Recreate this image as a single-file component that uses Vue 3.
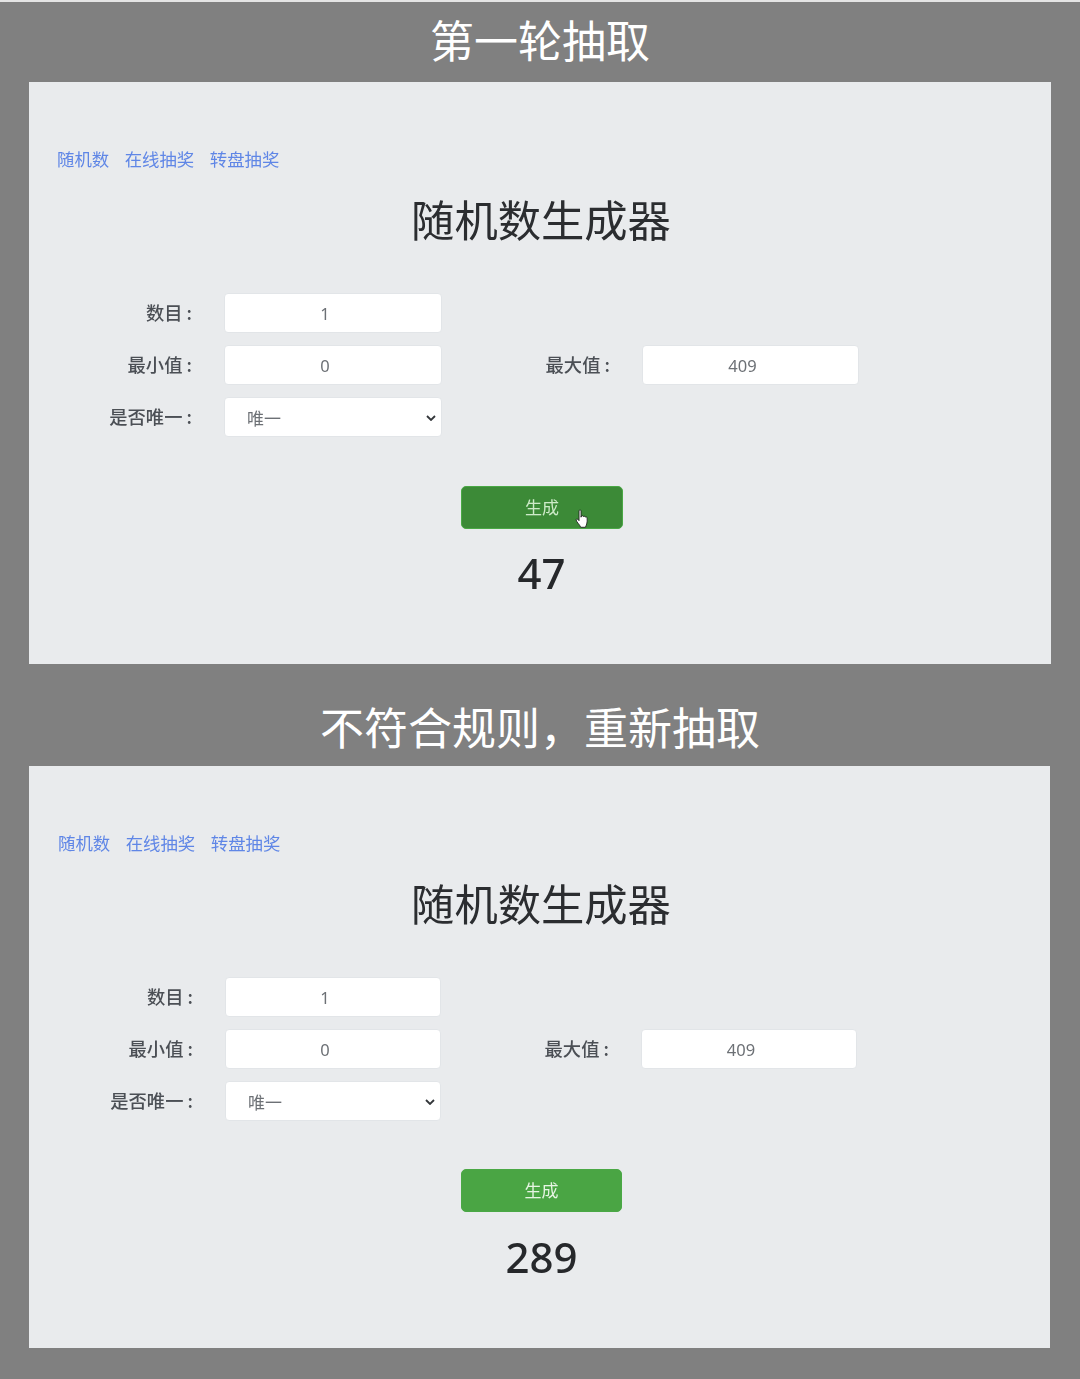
<script setup>
const rounds = [
  { title: '第一轮抽取', result: '47', variant: 'first', pressed: true },
  { title: '不符合规则，重新抽取', result: '289', variant: 'second', pressed: false }
]
const links = ['随机数', '在线抽奖', '转盘抽奖']
</script>

<template>
  <div class="page">
    <section v-for="r in rounds" :key="r.title" class="round" :class="r.variant">
      <h2 class="caption">{{ r.title }}</h2>
      <div class="panel">
        <nav class="nav">
          <a v-for="l in links" :key="l" href="#">{{ l }}</a>
        </nav>
        <h1 class="heading">随机数生成器</h1>
        <form class="form" @submit.prevent>
          <label class="label">数目 :</label>
          <input class="field" value="1" />
          <span></span><span></span>
          <label class="label">最小值 :</label>
          <input class="field" value="0" />
          <label class="label">最大值 :</label>
          <input class="field" value="409" />
          <label class="label">是否唯一 :</label>
          <div class="select-wrap">
            <select class="field pick"><option>唯一</option></select>
            <svg class="chevron" viewBox="0 0 10 6" width="10" height="6">
              <path d="M1 1l4 4 4-4" fill="none" stroke="#33363a" stroke-width="1.800"/>
            </svg>
          </div>
        </form>
        <div class="action">
          <button class="generate" :class="{ pressed: r.pressed }" type="button">
            生成
            <svg v-if="r.pressed" class="cursor" viewBox="1 0 13 20" width="15" height="21">
              <path d="M4.200 1.800c0-1.100 1.900-1.100 1.900 0v6l.4-1.200c.9-.5 1.600-.2 1.800.6.8-.6 1.600-.3 1.900.5.8-.4 1.600 0 1.700.9.2 1.900.1 4.100-.4 5.700-.4 1.300-.9 2.200-1.200 3.100H5.800c-.5-1.500-1.500-2.500-2.600-3.900-.7-.9-1.500-2.100-1.700-3-.2-.8.6-1.300 1.300-.8l1.400 1.400z" fill="#fff" stroke="#1c1c1c" stroke-width=".8" stroke-linejoin="round"/>
            </svg>
          </button>
        </div>
        <div class="result">{{ r.result }}</div>
      </div>
    </section>
  </div>
</template>

<style>
html, body { margin: 0; background: #808080; }
</style>

<style scoped>
.page {
  width: 1080px;
  height: 1379px;
  box-sizing: border-box;
  background: #808080;
  border-top: 2px solid #e4e4e4;
  overflow: hidden;
  font-family: "Noto Sans", "Noto Sans CJK SC", sans-serif;
}
.caption {
  margin: 0;
  color: #fff;
  font-family: "Noto Sans CJK SC", sans-serif;
  font-size: 44px;
  font-weight: 400;
  line-height: 76px;
  text-align: center;
}
.first .caption { height: 80px; line-height: 74px; }
.second .caption { height: 102px; padding-top: 24px; box-sizing: border-box; }
.panel {
  height: 582px;
  box-sizing: border-box;
  margin-left: 29px;
  width: 1022px;
  background: #e9ebed;
  padding: 65px 0 0 28px;
  filter: blur(.5px);
}
.second .panel { width: 1021px; padding-left: 29px; }
.nav { display: flex; gap: 15.500px; height: 24px; line-height: 24px; }
.nav a {
  color: #5f86e6;
  font-size: 17.400px;
  text-decoration: none;
  font-family: "Noto Sans CJK SC", sans-serif;
}
.heading {
  margin: 22px 0 0 -26px;
  height: 50px;
  line-height: 50px;
  font-family: "Noto Sans CJK SC", sans-serif;
  font-size: 43.300px;
  font-weight: 400;
  color: #2b2d30;
  text-align: center;
}
.form {
  display: grid;
  grid-template-columns: 137px 218px 140px 217px;
  grid-auto-rows: 40px;
  gap: 12px 30px;
  margin-top: 50px;
  align-items: center;
}
.second .form { grid-template-columns: 137px 216px 140px 216px; }
.label {
  text-align: right;
  font-size: 18.300px;
  font-weight: 500;
  color: #4b4f55;
  font-family: "Noto Sans CJK SC", sans-serif;
  padding: 0 2px 2px 0;
}
.field {
  box-sizing: border-box;
  width: 100%;
  height: 40px;
  border: 1px solid #e2e5e8;
  border-radius: 4px;
  background: #fff;
  color: #6c7075;
  font-size: 16.500px;
  font-family: "Noto Sans", sans-serif;
  text-align: center;
  padding: 0 16px 0 0;
  outline: none;
}
.select-wrap { position: relative; height: 40px; }
.pick {
  display: block;
  appearance: none;
  text-align: left;
  padding: 0 0 0 22px;
  font-family: "Noto Sans CJK SC", sans-serif;
  font-size: 17px;
}
.chevron { position: absolute; right: 6px; top: 18px; pointer-events: none; }
.action { display: flex; justify-content: center; margin: 49px 0 0 -24px; }
.second .action { margin-top: 48px; margin-left: -25px; }
.generate {
  position: relative;
  width: 162px;
  height: 43px;
  border: 1px solid #4aa845;
  border-radius: 5px;
  background: #4aa544;
  color: #e6f4e3;
  font-family: "Noto Sans CJK SC", sans-serif;
  font-size: 17px;
  padding: 0 0 2px;
}
.second .generate { width: 161px; }
.generate.pressed { background: #3c8a37; color: #cdeac8; }
.cursor { position: absolute; left: 113px; top: 22px; }
.result {
  margin: 19px 0 0 -25px;
  height: 50px;
  line-height: 50px;
  text-align: center;
  font-size: 42px;
  font-weight: 500;
  color: #26282b;
}
.second .result { margin-top: 20px; }
</style>
